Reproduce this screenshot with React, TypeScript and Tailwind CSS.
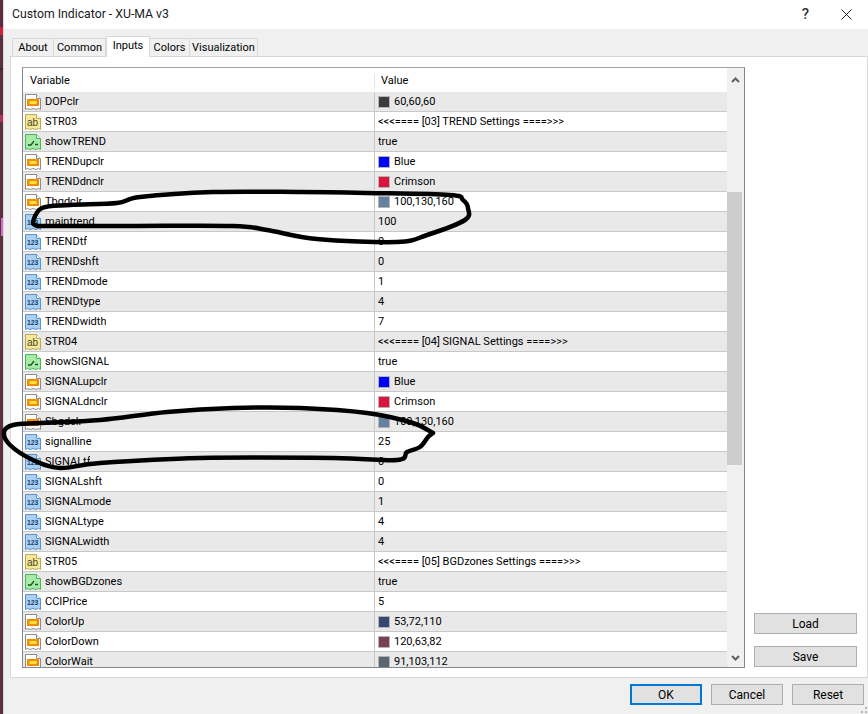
const F = "font-['Roboto','Open_Sans',sans-serif]";

type Kind = "clr" | "ab" | "bool" | "num";
type Row = { n: string; k: Kind; v: string; c?: string };

const rows: Row[] = [
  { n: "DOPclr", k: "clr", v: "60,60,60", c: "#3c3c3c" },
  { n: "STR03", k: "ab", v: "<<<==== [03] TREND Settings ====>>>" },
  { n: "showTREND", k: "bool", v: "true" },
  { n: "TRENDupclr", k: "clr", v: "Blue", c: "#0000ff" },
  { n: "TRENDdnclr", k: "clr", v: "Crimson", c: "#dc143c" },
  { n: "Tbgdclr", k: "clr", v: "100,130,160", c: "#6482a0" },
  { n: "maintrend", k: "num", v: "100" },
  { n: "TRENDtf", k: "num", v: "0" },
  { n: "TRENDshft", k: "num", v: "0" },
  { n: "TRENDmode", k: "num", v: "1" },
  { n: "TRENDtype", k: "num", v: "4" },
  { n: "TRENDwidth", k: "num", v: "7" },
  { n: "STR04", k: "ab", v: "<<<==== [04] SIGNAL Settings ====>>>" },
  { n: "showSIGNAL", k: "bool", v: "true" },
  { n: "SIGNALupclr", k: "clr", v: "Blue", c: "#0000ff" },
  { n: "SIGNALdnclr", k: "clr", v: "Crimson", c: "#dc143c" },
  { n: "Sbgdclr", k: "clr", v: "100,130,160", c: "#6482a0" },
  { n: "signalline", k: "num", v: "25" },
  { n: "SIGNALtf", k: "num", v: "0" },
  { n: "SIGNALshft", k: "num", v: "0" },
  { n: "SIGNALmode", k: "num", v: "1" },
  { n: "SIGNALtype", k: "num", v: "4" },
  { n: "SIGNALwidth", k: "num", v: "4" },
  { n: "STR05", k: "ab", v: "<<<==== [05] BGDzones Settings ====>>>" },
  { n: "showBGDzones", k: "bool", v: "true" },
  { n: "CCIPrice", k: "num", v: "5" },
  { n: "ColorUp", k: "clr", v: "53,72,110", c: "#35486e" },
  { n: "ColorDown", k: "clr", v: "120,63,82", c: "#783f52" },
  { n: "ColorWait", k: "clr", v: "91,103,112", c: "#5b6770" },
];

const sheet = "M0.5 0.5H11.5L15.5 4.5V15.5L13.5 14.5L11 15.5L8 14.5L5 15.5L2.5 14.5L0.5 15.5Z";

function Icon({ k }: { k: Kind }) {
  const pal = {
    clr: ["#ffffff", "#8c8c8c"],
    ab: ["#f6e99a", "#b9aa5c"],
    bool: ["#a6eca6", "#4cb25e"],
    num: ["#a9d0f2", "#5b93c7"],
  }[k];
  return (
    <svg width="16" height="16" viewBox="0 0 16 16" className="shrink-0">
      <path d={sheet} fill={pal[0]} stroke={pal[1]} />
      <path d="M11.5 0.5V4.5H15.5" fill="#ffffff" stroke={pal[1]} />
      {k === "clr" && (
        <>
          <rect x="2" y="5" width="12" height="7" fill="#f78b00" />
          <rect x="4.5" y="7" width="7" height="3" fill="#ffe23a" />
        </>
      )}
      {k === "ab" && (
        <text x="2" y="11.5" fontSize="10" fontFamily="Liberation Sans" fill="#4d4520">
          ab
        </text>
      )}
      {k === "bool" && (
        <path d="M3 11H6L9 7M10 10.5H13" fill="none" stroke="#17552a" strokeWidth="1.3" />
      )}
      {k === "num" && (
        <text x="2" y="11" fontSize="6.8" fontWeight="700" fontFamily="Liberation Sans" fill="#14406e">
          123
        </text>
      )}
    </svg>
  );
}

function Btn({ children, cls }: { children: string; cls: string }) {
  return (
    <div className={"flex items-center justify-center bg-[#e1e1e1] text-[12px] text-black " + cls}>{children}</div>
  );
}

const tabs: [string, string][] = [
  ["About", "w-[42px]"],
  ["Common", "w-[52px]"],
  ["Colors", "w-[40px]"],
  ["Visualization", "w-[68px]"],
];

function smooth(p: number[][]) {
  let d = `M${p[0][0]} ${p[0][1]}`;
  for (let i = 0; i < p.length - 1; i++) {
    const a = p[Math.max(i - 1, 0)];
    const b = p[i];
    const c = p[i + 1];
    const e = p[Math.min(i + 2, p.length - 1)];
    const c1x = b[0] + (c[0] - a[0]) / 6;
    const c1y = b[1] + (c[1] - a[1]) / 6;
    const c2x = c[0] - (e[0] - b[0]) / 6;
    const c2y = c[1] - (e[1] - b[1]) / 6;
    d += `C${c1x} ${c1y} ${c2x} ${c2y} ${c[0]} ${c[1]}`;
  }
  return d;
}

const ink1 = [
  [37, 226], [33, 222], [42, 208], [70, 205], [117, 203], [140, 197], [213, 192], [300, 192], [367, 193],
  [450, 195], [463, 200], [468, 208], [465, 220], [427, 235], [397, 242], [317, 239], [267, 230],
  [233, 226], [130, 226], [37, 226],
];
const ink2 = [
  [433, 433], [413, 423], [367, 413], [300, 408], [233, 408], [167, 412], [100, 420], [40, 423], [13, 425],
  [4, 432], [10, 445], [33, 460], [60, 468], [100, 463], [200, 458], [333, 458], [397, 460], [407, 452],
  [420, 447], [428, 437], [433, 433],
];

export default function App() {
  return (
    <div className={"relative flex h-[714px] w-[868px] overflow-hidden bg-[#f0f0f0] text-[11px] text-black " + F}>
      <svg width="3" height="714" viewBox="0 0 3 714" className="shrink-0">
        <rect width="3" height="714" fill="#5b2f42" />
        <rect y="27" width="3" height="8" fill="#d0203f" />
        <rect y="68" width="3" height="2" fill="#2b2b2b" />
        <rect y="115" width="3" height="7" fill="#b8304f" />
        <rect x="1" y="218" width="2" height="18" fill="#d070c8" />
      </svg>
      <div className="flex min-w-0 flex-1 flex-col border-l border-[#d8d8d8]">
        <div className="flex h-[29px] shrink-0 items-center justify-between bg-white pl-[8px] pr-[16px]">
          <span className="text-[12.25px] text-[#1a1a1a]">Custom Indicator - XU-MA v3</span>
          <div className="flex items-center gap-[32px]">
            <span className="text-[15px] font-medium text-[#333]">?</span>
            <svg width="11" height="11" viewBox="0 0 11 11">
              <path d="M0.5 0.5L10.5 10.5M10.5 0.5L0.5 10.5" stroke="#222" strokeWidth="1" fill="none" />
            </svg>
          </div>
        </div>

        <div className="flex h-[27px] shrink-0 items-end pl-[8px]">
          {tabs.slice(0, 2).map(([t, w]) => (
            <div
              key={t}
              className={
                "flex h-[18px] items-center justify-center border border-b-0 border-l-0 border-[#d9d9d9] bg-[#f0f0f0] pt-[1px] first:border-l " +
                w
              }
            >
              {t}
            </div>
          ))}
          <div className="z-10 -mb-px flex h-[21px] w-[44px] items-center justify-center border border-b-0 border-[#d9d9d9] bg-white pb-[2px]">
            Inputs
          </div>
          {tabs.slice(2).map(([t, w]) => (
            <div
              key={t}
              className={
                "flex h-[18px] items-center justify-center border border-b-0 border-l-0 border-[#d9d9d9] bg-[#f0f0f0] pt-[1px] " +
                w
              }
            >
              {t}
            </div>
          ))}
        </div>

        <div className="ml-[6px] flex h-[622px] shrink-0 border border-[#d9d9d9] bg-white pb-[9px] pl-[11px] pr-[22px] pt-[10px]">
          <div className="flex h-full w-[723px] shrink-0 border border-[#828790] border-t-[#a0a0a0] bg-white">
            <div className="flex min-w-0 flex-1 flex-col overflow-hidden">
              <div className="flex h-[24px] shrink-0 items-center bg-white pt-[2px]">
                <div className="w-[352px] border-r border-[#e5e5e5] pl-[7px]">Variable</div>
                <div className="pl-[6px]">Value</div>
              </div>
              {rows.map((r, i) => (
                <div
                  key={r.n}
                  className={
                    "flex h-[20px] shrink-0 items-center border-b border-[#c8c8c8] " +
                    (i % 2 === 0 ? "bg-[#e9e9e9]" : "bg-white")
                  }
                >
                  <div className="flex h-full w-[352px] shrink-0 items-center gap-[4px] border-r border-[#c8c8c8] pl-[2px]">
                    <Icon k={r.k} />
                    <span className="truncate pt-[2px]">{r.n}</span>
                  </div>
                  <div className="flex items-center gap-[4px] pl-[3px]">
                    {r.c && <span className="h-[12px] w-[12px] border border-[#b5b5b5]" style={{ background: r.c }} />}
                    <span className="pt-[2px]">{r.v}</span>
                  </div>
                </div>
              ))}
            </div>
            <div className="flex w-[17px] shrink-0 flex-col bg-[#f0f0f0]">
              <div className="flex h-[17px] items-center justify-center pt-[6px]">
                <svg width="9" height="6" viewBox="0 0 9 6">
                  <path d="M1 5L4.5 1.5L8 5" stroke="#606060" strokeWidth="2" fill="none" />
                </svg>
              </div>
              <div className="mt-[107px] h-[273px] w-[15px] bg-[#cdcdcd]" />
              <div className="mt-auto flex h-[17px] items-center justify-center pb-[2px]">
                <svg width="9" height="6" viewBox="0 0 9 6">
                  <path d="M1 1L4.5 4.5L8 1" stroke="#606060" strokeWidth="2" fill="none" />
                </svg>
              </div>
            </div>
          </div>
          <div className="ml-[9px] flex flex-1 flex-col justify-end gap-[12px] pb-[1px]">
            <Btn cls="h-[21px] w-[103px] border border-[#adadad]">Load</Btn>
            <Btn cls="h-[21px] w-[103px] border border-[#adadad]">Save</Btn>
          </div>
        </div>

        <div className="flex flex-1 items-start justify-end gap-[9px] pr-[4px] pt-[6px]">
          <Btn cls="h-[21px] w-[72px] border-2 border-[#0078d7]">OK</Btn>
          <Btn cls="h-[21px] w-[72px] border border-[#adadad]">Cancel</Btn>
          <Btn cls="h-[21px] w-[72px] border border-[#adadad]">Reset</Btn>
        </div>
      </div>

      {/* resize grip */}
      <svg className="absolute bottom-[1px] right-[1px]" width="6" height="6" viewBox="0 0 6 6">
        <rect x="4" y="0" width="2" height="2" fill="#b8b8b8" />
        <rect x="0" y="4" width="2" height="2" fill="#b8b8b8" />
        <rect x="4" y="4" width="2" height="2" fill="#b8b8b8" />
      </svg>

      {/* hand-drawn ink over the picture */}
      <svg className="pointer-events-none absolute left-0 top-0" width="868" height="714" viewBox="0 0 868 714">
        <path d={smooth(ink1)} fill="none" stroke="#000" strokeWidth="4.5" strokeLinejoin="round" strokeLinecap="round" />
        <path d={smooth(ink2)} fill="none" stroke="#000" strokeWidth="4.5" strokeLinejoin="round" strokeLinecap="round" />
      </svg>
    </div>
  );
}
